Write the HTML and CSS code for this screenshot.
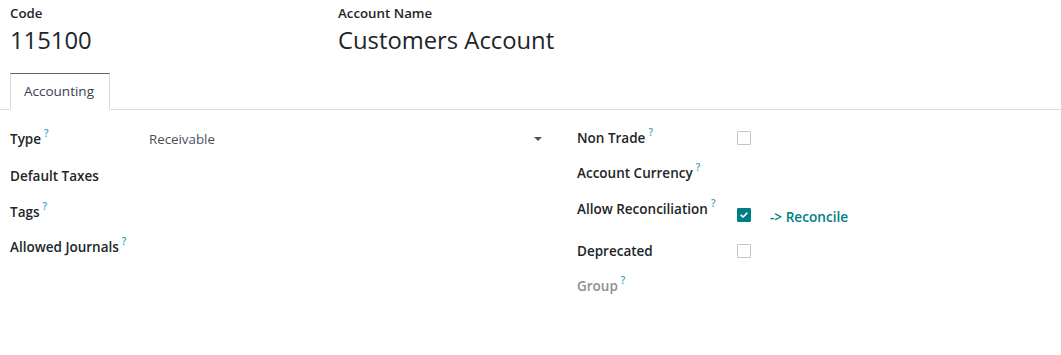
FILE: index.html
```html
<!DOCTYPE html>
<html>
<head>
<meta charset="utf-8">
<link rel="stylesheet" href="styles.css">
</head>
<body>
<div class="sheet">
  <div class="title-row">
    <div class="title-col code-col">
      <div class="title-label">Code</div>
      <div class="title-value">115100</div>
    </div>
    <div class="title-col">
      <div class="title-label">Account Name</div>
      <div class="title-value">Customers Account</div>
    </div>
  </div>
  <div class="tabs">
    <div class="tab active">Accounting</div>
  </div>
  <div class="groups">
    <div class="group left">
      <div class="row">
        <div class="label">Type<sup class="help">?</sup></div>
        <div class="field select">
          <span class="select-value">Receivable</span>
          <span class="caret"></span>
        </div>
      </div>
      <div class="row">
        <div class="label">Default Taxes</div>
        <div class="field"></div>
      </div>
      <div class="row">
        <div class="label">Tags<sup class="help">?</sup></div>
        <div class="field"></div>
      </div>
      <div class="row">
        <div class="label">Allowed Journals<sup class="help">?</sup></div>
        <div class="field"></div>
      </div>
    </div>
    <div class="group right">
      <div class="row">
        <div class="label">Non Trade<sup class="help">?</sup></div>
        <div class="field"><span class="checkbox"></span></div>
      </div>
      <div class="row">
        <div class="label">Account Currency<sup class="help">?</sup></div>
        <div class="field"></div>
      </div>
      <div class="row row-recon">
        <div class="label">Allow Reconciliation<sup class="help">?</sup></div>
        <div class="field recon">
          <span class="checkbox checked">
            <svg viewBox="0 0 14 14" width="14" height="14"><path d="M3.6 7.2 L6 9.4 L10.4 4.8" fill="none" stroke="#fff" stroke-width="1.8" stroke-linecap="round" stroke-linejoin="round"/></svg>
          </span>
          <span class="link">-&gt; Reconcile</span>
        </div>
      </div>
      <div class="row">
        <div class="label">Deprecated</div>
        <div class="field"><span class="checkbox"></span></div>
      </div>
      <div class="row">
        <div class="label muted">Group<sup class="help">?</sup></div>
        <div class="field"></div>
      </div>
    </div>
  </div>
</div>
</body>
</html>
```

FILE: styles.css
```css
* { box-sizing: border-box; }
html, body { margin: 0; padding: 0; background: #fff; }
body {
  font-family: "Open Sans", "Noto Sans", sans-serif;
  color: #212529;
  font-size: 13px;
}
.sheet { width: 1061px; }
.title-row {
  display: flex;
  padding: 4px 0 0 10px;
}
.title-col { display: flex; flex-direction: column; }
.code-col { width: 328px; }
.title-label {
  font-weight: 600;
  font-size: 13.3px;
  line-height: 18px;
  color: #212529;
}
.title-value {
  font-size: 23.8px;
  line-height: 36px;
  color: #212529;
}
.tabs {
  margin-top: 15px;
  display: flex;
  padding-left: 10px;
  border-bottom: 1px solid #d8dadd;
  height: 37px;
}
.tab {
  padding: 0 13px;
  font-size: 13.5px;
  line-height: 35px;
  color: #374151;
}
.tab.active {
  border: 1px solid #d8dadd;
  border-top-color: #6d5a68;
  border-bottom: 1px solid #fff;
  background: #fff;
  height: 37px;
  width: 100px;
  padding-left: 13px;
}
.groups {
  display: flex;
  padding: 11px 0 0 10px;
}
.group { display: flex; flex-direction: column; }
.group.left { width: 535px; margin-right: 32px; }
.group.right { width: 470px; margin-top: -1px; }
.row {
  display: flex;
  align-items: center;
  height: 36px;
}
.group.left .row:nth-child(2) { height: 37px; }
.group.left .row:nth-child(3) { height: 35px; }
.group.right .row { height: 35px; }
.group.right .row.row-recon {
  height: 43px;
  align-items: flex-start;
}
.row-recon .label { padding-top: 10px; }
.group.left .label { width: 139px; }
.group.right .label { width: 160px; }
.label {
  font-weight: 600;
  font-size: 13.5px;
  color: #212529;
  flex-shrink: 0;
}
.label.muted { color: #8f8f8f; }
.help {
  color: #3a9fc0;
  font-size: 10px;
  font-weight: 600;
  margin-left: 3px;
  vertical-align: 7px;
  line-height: 0;
}
.field { flex: 1; display: flex; align-items: center; }
.select { justify-content: space-between; padding-right: 3px; }
.select-value { color: #495057; font-size: 13.3px; }
.caret {
  width: 0; height: 0;
  border-left: 4px solid transparent;
  border-right: 4px solid transparent;
  border-top: 4px solid #4b5563;
}
.checkbox {
  width: 14px; height: 14px;
  border: 1px solid #c4c4c4;
  border-radius: 1px;
  display: inline-flex;
  align-items: center;
  justify-content: center;
  background: #fff;
}
.checkbox.checked {
  background: #017e84;
  border-color: #017e84;
}
.checkbox svg { display: block; }
.recon { padding-top: 13px; }
.link {
  margin-left: 19px;
  color: #017e84;
  font-weight: 600;
  font-size: 13.6px;
  margin-top: 4px;
}
```
